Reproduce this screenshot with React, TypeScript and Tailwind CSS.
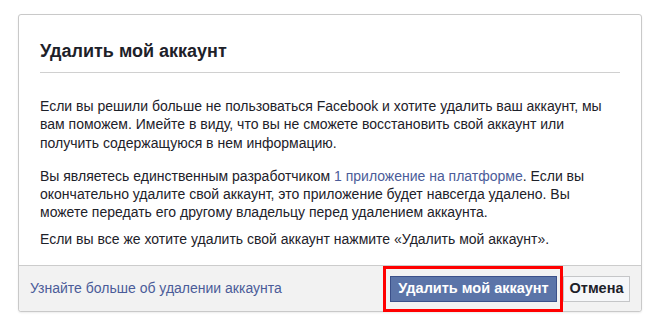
export default function App() {
  return (
    <div
      className="min-h-[329px] w-[664px] bg-white pt-[14px] pl-[18px]"
      style={{ fontFamily: '"Liberation Sans", Arial, sans-serif' }}
    >
      <div className="w-[624px] overflow-visible rounded-[3px] border border-[#c9c9c9] bg-white shadow-[0_1px_2px_rgba(0,0,0,0.08)]">
        {/* Header */}
        <div className="px-[21px]">
          <h1 className="border-b border-[#d0d0d0] pt-[26px] pb-[11px] text-[18px] font-bold leading-[20px] text-[#1d2129]">
            Удалить мой аккаунт
          </h1>
        </div>

        {/* Body */}
        <div className="px-[21px] pt-[24px] pb-[17px] text-[14px] leading-[18.3px] text-[#1d2129]">
          <p className="mb-[15px]">
            Если вы решили больше не пользоваться Facebook и хотите удалить ваш аккаунт, мы вам поможем.
            Имейте в виду, что вы не сможете восстановить свой аккаунт или получить содержащуюся в нем
            информацию.
          </p>
          <p className="mb-[8px]">
            Вы являетесь единственным разработчиком{" "}
            <a href="#" className="text-[#4b5c99]">
              1 приложение на платформе
            </a>
            . Если вы окончательно удалите свой аккаунт, это приложение будет навсегда удалено. Вы можете
            передать его другому владельцу перед удалением аккаунта.
          </p>
          <p>Если вы все же хотите удалить свой аккаунт нажмите «Удалить мой аккаунт».</p>
        </div>

        {/* Footer */}
        <div className="flex h-[46px] items-center rounded-b-[3px] border-t border-[#cccccc] bg-[#f2f2f2] pl-[11px] pr-[11px]">
          <a href="#" className="text-[14px] text-[#4b5c99]">
            Узнайте больше об удалении аккаунта
          </a>
          <div className="ml-auto flex items-center gap-[6px]">
            <div className="relative">
              <button className="h-[26px] w-[167px] border border-[#3b5089] bg-[#5b74a8] text-[14.5px] font-bold text-white">
                Удалить мой аккаунт
              </button>
              <div className="pointer-events-none absolute -top-[10px] -bottom-[10px] -left-[7px] -right-[6px] border-[3px] border-[#ff0000]" />
            </div>
            <button className="h-[26px] w-[67px] border border-[#c5c6c8] bg-[#f6f7f9] text-[14.5px] font-bold text-[#1d2129]">
              Отмена
            </button>
          </div>
        </div>
      </div>
    </div>
  );
}
